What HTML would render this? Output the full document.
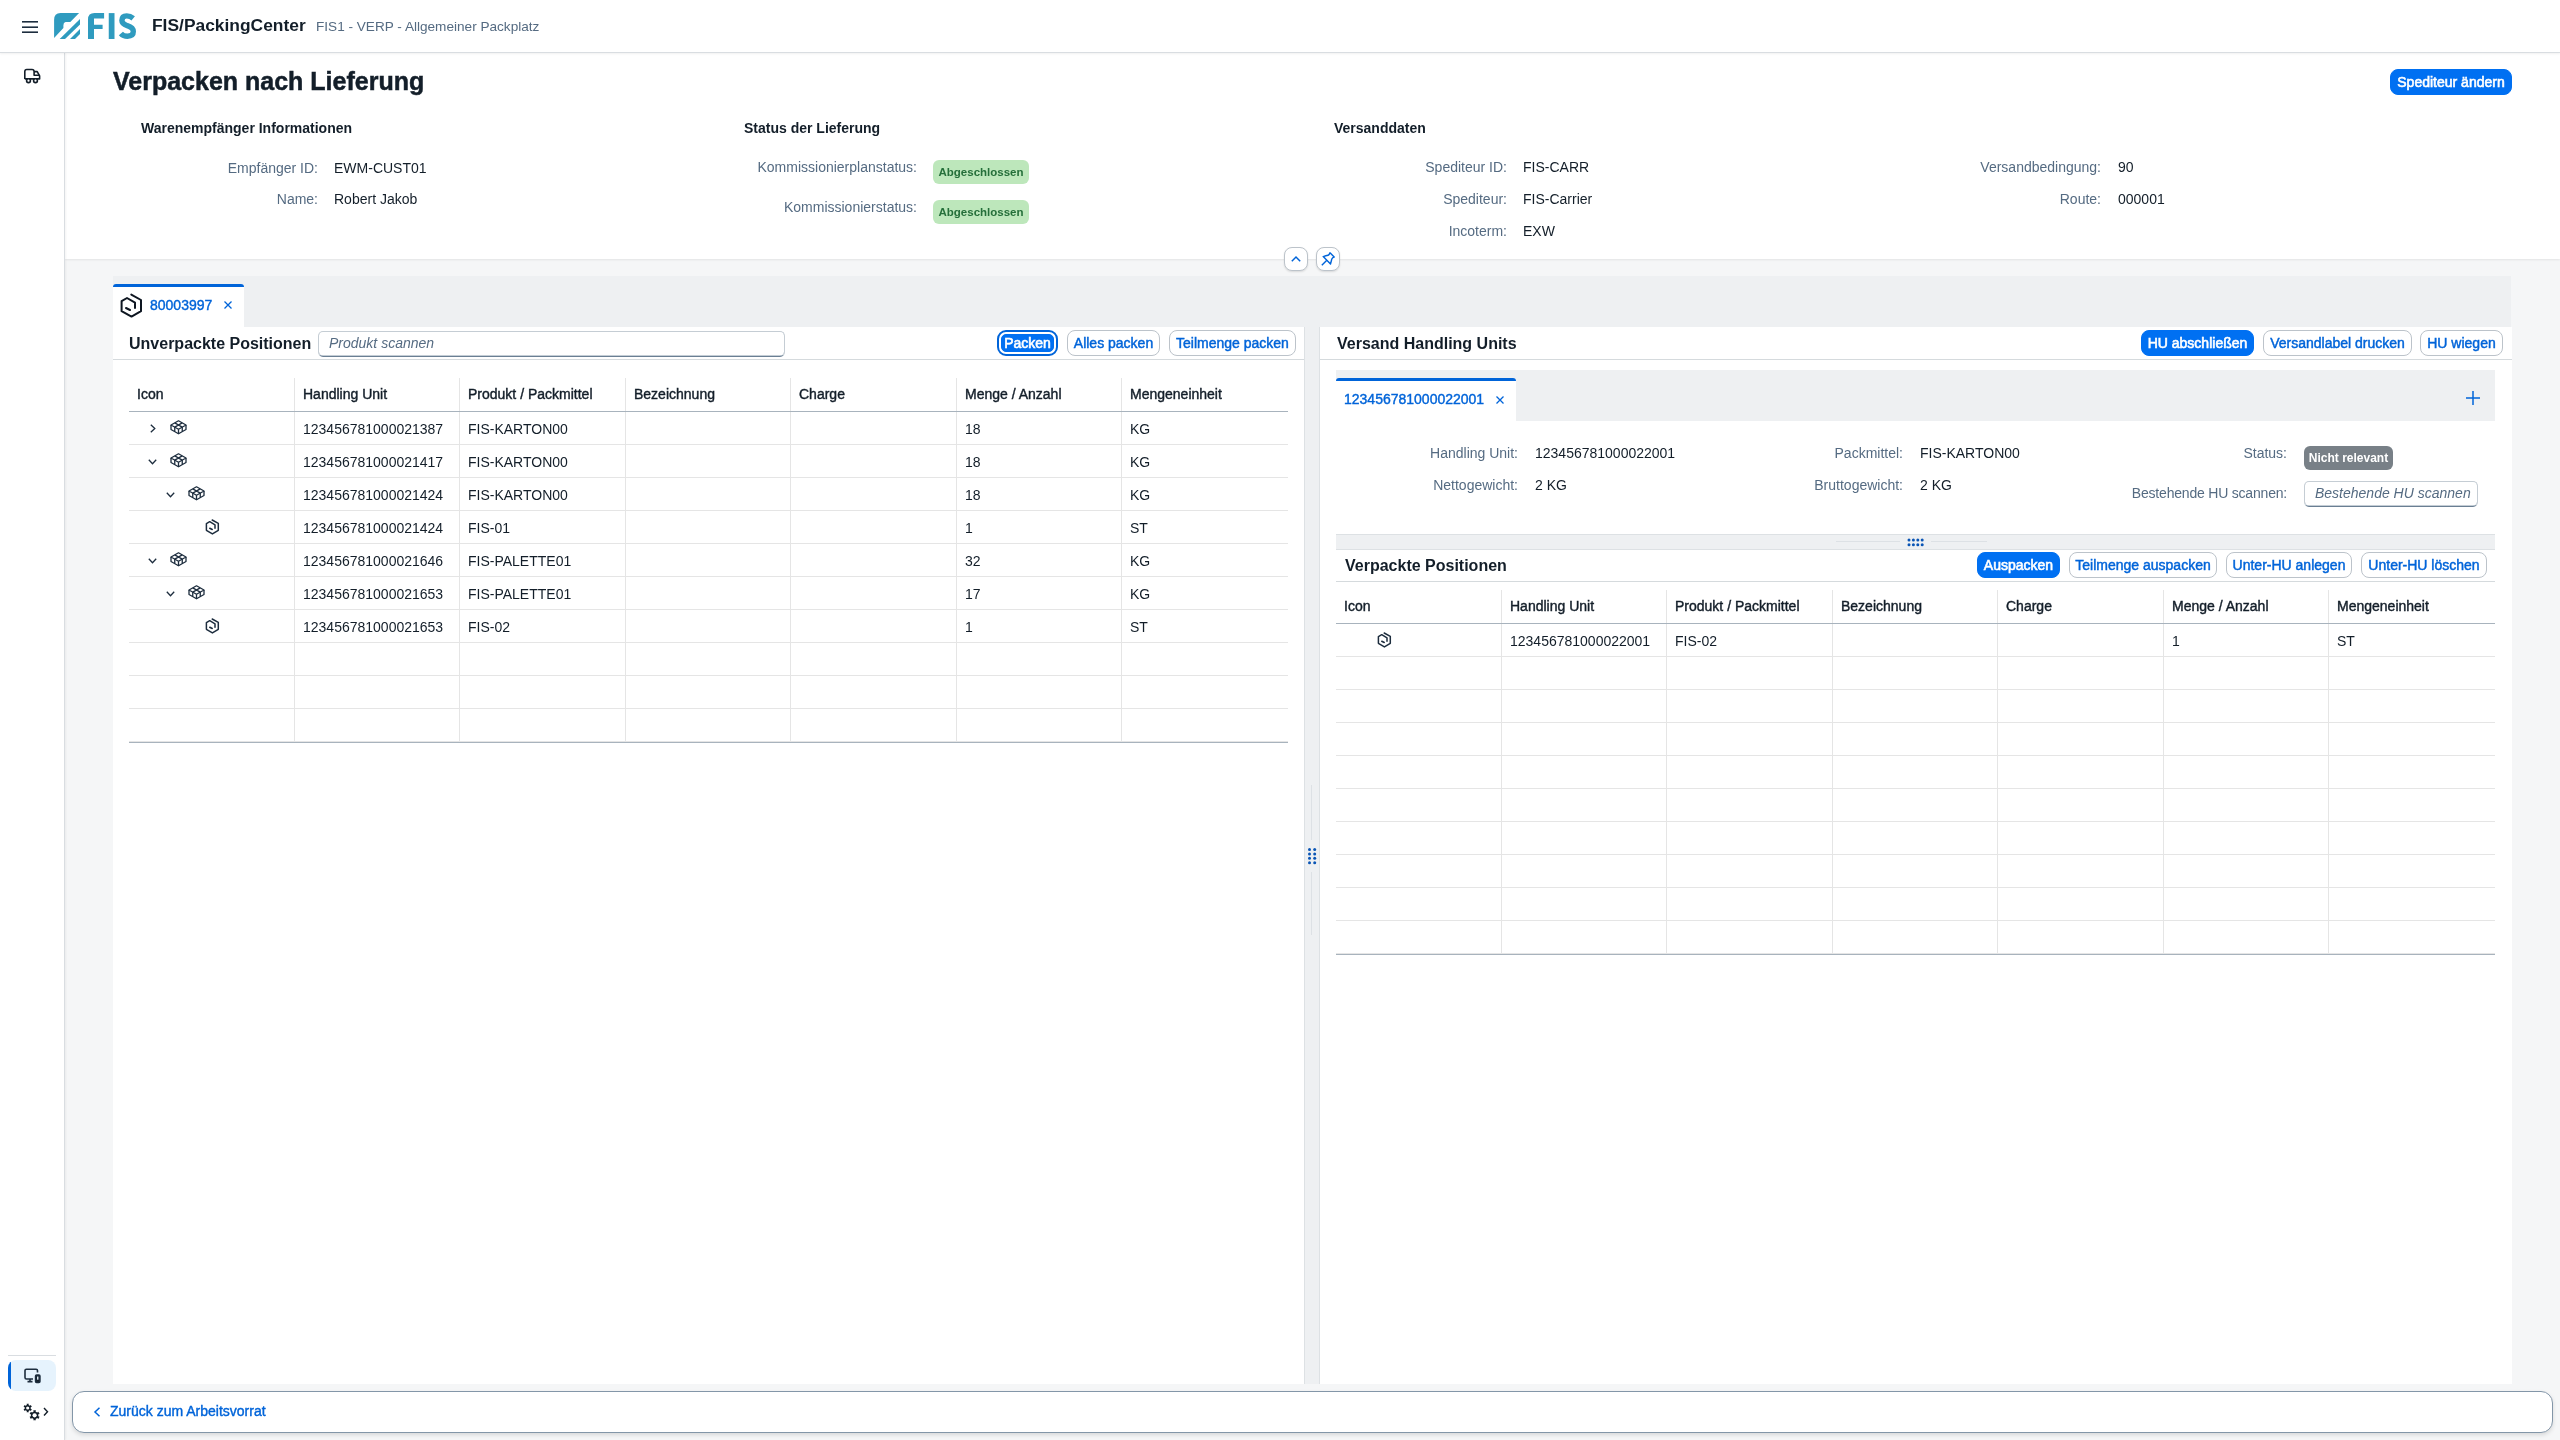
<!DOCTYPE html>
<html><head><meta charset="utf-8">
<style>
*{box-sizing:border-box;margin:0;padding:0}
html,body{width:2560px;height:1440px;overflow:hidden}
body{position:relative;background:#f5f6f7;font-family:"Liberation Sans",sans-serif;color:#131e29;font-size:14px;line-height:16px}
.a{position:absolute;white-space:nowrap}
.lbl{color:#556b82}
.r{text-align:right}
.sb{-webkit-text-stroke:0.4px currentColor}
svg{position:absolute;overflow:visible}
/* shell */
#shell{position:absolute;left:0;top:0;width:2560px;height:53px;background:#fff;border-bottom:1px solid #d9dde1;box-shadow:0 1px 2px rgba(0,0,0,.06);z-index:3}
#nav{position:absolute;left:0;top:53px;width:65px;height:1387px;background:#fff;border-right:1px solid #d9dde1;box-shadow:1px 0 2px rgba(0,0,0,.05);z-index:2}
#hdr{position:absolute;left:65px;top:53px;width:2495px;height:206px;background:#fff;box-shadow:0 1px 2px rgba(0,0,0,.08)}
.btn{position:absolute;height:26px;border:1px solid #bcc3ca;border-radius:8px;background:#fff;color:#0064d9;font-size:14px;line-height:24px;text-align:center;white-space:nowrap;-webkit-text-stroke:0.45px currentColor}
.btn.e{background:#0070f2;border-color:#0070f2;color:#fff;-webkit-text-stroke:0.6px #fff}
.badge{position:absolute;height:24px;border-radius:6px;font-size:12px;line-height:24px;font-weight:bold;text-align:center;white-space:nowrap}
.inp{position:absolute;height:26px;background:#fff;border:1px solid #c5cdd4;border-bottom:1px solid #6a7f93;border-radius:5px;box-shadow:inset 0 -0.5px 0 #8a9bab;color:#556b82;font-style:italic;font-size:14px;line-height:22px;padding-left:10px;white-space:nowrap}
.panel{position:absolute;background:#fff}
.tb{position:absolute;height:33px;border-bottom:1px solid #d5dadd}
.tbl{position:absolute}
.hl{position:absolute;height:1px;background:#e5e5e5}
.vl{position:absolute;width:1px;background:#e5e5e5}
</style></head>
<body>
<div id="root" style="position:absolute;left:0;top:0;width:2560px;height:1440px;overflow:hidden;will-change:transform">

<!-- SHELL -->
<div id="shell">
  <svg style="left:22px;top:20px" width="16" height="14" viewBox="0 0 16 14">
    <rect x="0" y="1" width="16" height="1.6" fill="#1d2d3e"/>
    <rect x="0" y="6.4" width="16" height="1.6" fill="#1d2d3e"/>
    <rect x="0" y="11.4" width="16" height="1.6" fill="#1d2d3e"/>
  </svg>
  <!-- FIS logo -->
  <svg style="left:53px;top:12px" width="84" height="28" viewBox="0 0 84 28">
    <path d="M1.1 26 V8 Q1.1 1.1 7.5 1.1 H26.1 L17.3 10 H12.6 Q10.4 10.6 10.4 13.2 V16.1 Z" fill="#2f9bbf"/>
    <path d="M6.7 27.1 L27 7.1 V12.4 L12 27.1 Z" fill="#2f9bbf"/>
    <path d="M17 27.1 L27 17.1 V22.1 L22 27.1 Z" fill="#2f9bbf"/>
    <path d="M35 27 V7.5 Q35 1.1 41.5 1.1 H51.1 V6.4 H41 V12.7 H49.6 V17 H41 V27 Z" fill="#2f9bbf"/>
    <rect x="55.75" y="1.1" width="5.75" height="25.9" fill="#2f9bbf"/>
    <path d="M80.2 6.3 Q77.3 3.9 73.7 3.9 Q68.9 3.9 68.9 8.6 Q68.9 11.9 74.2 13.7 Q80.3 15.6 80.3 19.6 Q80.3 24.2 74.5 24.2 Q70.3 24.2 67.9 21.4" fill="none" stroke="#2f9bbf" stroke-width="5.4"/>
  </svg>
  <div class="a" style="left:152px;top:15px;font:bold 17.4px/20px 'Liberation Sans';color:#131e29">FIS/PackingCenter</div>
  <div class="a lbl" style="left:316px;top:19px;font-size:13.6px">FIS1 - VERP - Allgemeiner Packplatz</div>
</div>

<!-- LEFT NAV -->
<div id="nav">
  <svg style="left:24px;top:16px" width="17" height="15" viewBox="0 0 17 15" fill="none" stroke="#131e29" stroke-width="1.6" stroke-linejoin="round">
    <path d="M0.8 9.9 V2.6 Q0.8 0.5 2.8 0.5 H8 Q10.1 0.5 10.1 2.6 V6.3 H15.2"/>
    <path d="M10.1 2.6 H13.2 L15.6 6.8 V9.9 H0.8"/>
    <circle cx="4.5" cy="11.7" r="1.9" fill="#fff"/>
    <circle cx="11.5" cy="11.7" r="1.9" fill="#fff"/>
  </svg>
  <div class="a" style="left:8px;top:1302px;width:48px;height:1px;background:#d9dde1"></div>
  <div class="a" style="left:8px;top:1307px;width:48px;height:31px;background:#e6f3fd;border-radius:8px;overflow:hidden">
    <div style="position:absolute;left:0;top:0;width:3px;height:31px;background:#0064d9"></div>
  </div>
  <svg style="left:24px;top:1315px" width="17" height="15" viewBox="0 0 17 15" fill="none" stroke="#1d2d3e" stroke-width="1.6">
    <path d="M13.5 4.5 V2.6 Q13.5 1.2 12.1 1.2 H2.4 Q1 1.2 1 2.6 V9.6 Q1 11 2.4 11 H9"/>
    <path d="M6 11 V13.3 M3.5 13.6 H8.5"/>
    <rect x="11.6" y="7" width="4.3" height="7.4" rx="1" fill="#131e29"/>
    <rect x="13.05" y="8.5" width="1.4" height="3.2" fill="#e6f3fd" stroke="none"/>
  </svg>
  <svg style="left:23px;top:1350px" width="27" height="20" viewBox="0 0 27 20"><path d="M3.64 0.83 L5.76 0.83 L5.54 2.02 L6.87 2.78 L7.78 2.00 L8.84 3.84 L7.70 4.23 L7.70 5.77 L8.84 6.16 L7.78 8.00 L6.87 7.22 L5.54 7.98 L5.76 9.17 L3.64 9.17 L3.86 7.98 L2.53 7.22 L1.62 8.00 L0.56 6.16 L1.70 5.77 L1.70 4.23 L0.56 3.84 L1.62 2.00 L2.53 2.78 L3.86 2.02Z" fill="#131e29"/><circle cx="4.7" cy="5.0" r="1.6" fill="#fff"/><path d="M10.31 7.26 L12.89 7.26 L12.63 8.64 L14.26 9.58 L15.32 8.67 L16.61 10.89 L15.28 11.36 L15.28 13.24 L16.61 13.71 L15.32 15.93 L14.26 15.02 L12.63 15.96 L12.89 17.34 L10.31 17.34 L10.57 15.96 L8.94 15.02 L7.88 15.93 L6.59 13.71 L7.92 13.24 L7.92 11.36 L6.59 10.89 L7.88 8.67 L8.94 9.58 L10.57 8.64Z" fill="#131e29"/><circle cx="11.6" cy="12.3" r="2.1" fill="#fff"/><path d="M21 5 L24.5 8.7 L21 12.4" fill="none" stroke="#131e29" stroke-width="1.4"/></svg>
</div>

<!-- PAGE HEADER -->
<div id="hdr"></div>
<div class="a" style="left:113px;top:66px;font:bold 25px/30px 'Liberation Sans';color:#131e29;-webkit-text-stroke:0.5px #131e29">Verpacken nach Lieferung</div>
<div class="btn e" style="left:2390px;top:69px;width:122px">Spediteur ändern</div>

<div class="a" style="left:141px;top:120px;font-weight:bold">Warenempfänger Informationen</div>
<div class="a lbl r" style="left:118px;top:160px;width:200px">Empfänger ID:</div>
<div class="a" style="left:334px;top:160px">EWM-CUST01</div>
<div class="a lbl r" style="left:118px;top:191px;width:200px">Name:</div>
<div class="a" style="left:334px;top:191px">Robert Jakob</div>

<div class="a" style="left:744px;top:120px;font-weight:bold">Status der Lieferung</div>
<div class="a lbl r" style="left:617px;top:159px;width:300px">Kommissionierplanstatus:</div>
<div class="badge" style="left:933px;top:160px;width:96px;background:#bde7bb;color:#256f3a;font-size:11.5px">Abgeschlossen</div>
<div class="a lbl r" style="left:617px;top:199px;width:300px">Kommissionierstatus:</div>
<div class="badge" style="left:933px;top:200px;width:96px;background:#bde7bb;color:#256f3a;font-size:11.5px">Abgeschlossen</div>

<div class="a" style="left:1334px;top:120px;font-weight:bold">Versanddaten</div>
<div class="a lbl r" style="left:1307px;top:159px;width:200px">Spediteur ID:</div>
<div class="a" style="left:1523px;top:159px">FIS-CARR</div>
<div class="a lbl r" style="left:1307px;top:191px;width:200px">Spediteur:</div>
<div class="a" style="left:1523px;top:191px">FIS-Carrier</div>
<div class="a lbl r" style="left:1307px;top:223px;width:200px">Incoterm:</div>
<div class="a" style="left:1523px;top:223px">EXW</div>

<div class="a lbl r" style="left:1901px;top:159px;width:200px">Versandbedingung:</div>
<div class="a" style="left:2118px;top:159px">90</div>
<div class="a lbl r" style="left:1901px;top:191px;width:200px">Route:</div>
<div class="a" style="left:2118px;top:191px">000001</div>

<!-- collapse / pin -->
<div class="a" style="left:1284px;top:247px;width:24px;height:24px;background:#fff;border:1px solid #bcc3ca;border-radius:8px;box-shadow:0 1px 2px rgba(0,0,0,.12)"></div>
<svg style="left:1291px;top:256px" width="10" height="6" viewBox="0 0 10 6"><path d="M0.8 5.2 L5 1 L9.2 5.2" fill="none" stroke="#0064d9" stroke-width="1.5"/></svg>
<div class="a" style="left:1316px;top:247px;width:24px;height:24px;background:#fff;border:1px solid #bcc3ca;border-radius:8px;box-shadow:0 1px 2px rgba(0,0,0,.12)"></div>
<svg style="left:1321px;top:252px" width="14" height="14" viewBox="0 0 14 14" fill="none" stroke="#0064d9" stroke-width="1.4" stroke-linejoin="round">
  <path d="M9 0.8 L13.2 5 Q11.5 5.5 10.8 7 Q10.3 9 9.5 12 L2.2 4.6 Q5 3.8 7 3.3 Q8.5 2.6 9 0.8 Z"/>
  <path d="M5.8 8.2 L0.8 13.2"/>
</svg>

<!-- TAB STRIP -->
<div class="a" style="left:113px;top:276px;width:2398px;height:51px;background:#eef0f2"></div>
<div class="a" style="left:113px;top:284px;width:131px;height:43px;background:#fff;border-radius:4px 4px 0 0"></div>
<div class="a" style="left:113px;top:284px;width:131px;height:3px;background:#0064d9;border-radius:3px 3px 0 0"></div>
<svg style="left:115px;top:288px" width="35" height="36" viewBox="0 0 35 36" fill="none" stroke="#0e1621" stroke-width="2" stroke-linecap="round" stroke-linejoin="round">
  <path d="M16.3 6.6 L26 12 V23.2 L16.5 28.6 L6.6 23.2 V13.2 L12 10 L20 14.7 V20"/>
  <path d="M11 20 L15 22"/>
</svg>
<div class="a sb" style="left:150px;top:297px;color:#0064d9">80003997</div>
<svg style="left:224px;top:301px" width="8" height="8" viewBox="0 0 8 8"><path d="M0.5 0.5 L7.5 7.5 M7.5 0.5 L0.5 7.5" stroke="#0064d9" stroke-width="1.3"/></svg>

<!-- LEFT PANEL -->
<div class="panel" style="left:113px;top:327px;width:1191px;height:1057px"></div>
<!-- splitter -->
<div class="a" style="left:1304px;top:327px;width:16px;height:1057px;background:#eef0f2;border-left:1px solid #dde1e4;border-right:1px solid #dde1e4"></div>
<!-- RIGHT PANEL -->
<div class="panel" style="left:1320px;top:327px;width:1192px;height:1057px"></div>

<!-- FOOTER -->
<div class="a" style="left:72px;top:1391px;width:2481px;height:42px;background:#fff;border:1px solid #8396a8;border-radius:12px;box-shadow:0 2px 4px rgba(0,0,0,.12)"></div>
<svg style="left:93px;top:1407px" width="8" height="10" viewBox="0 0 8 10"><path d="M6.5 0.8 L2 5 L6.5 9.2" fill="none" stroke="#0064d9" stroke-width="1.5"/></svg>
<div class="a sb" style="left:110px;top:1403px;color:#0064d9">Zurück zum Arbeitsvorrat</div>

<!--CONTENT-->
<div class="tb" style="left:113px;top:327px;width:1191px"></div>
<div class="a" style="left:129px;top:335px;font:bold 16px/18px 'Liberation Sans'">Unverpackte Positionen</div>
<div class="inp" style="left:318px;top:331px;width:467px">Produkt scannen</div>
<div class="a" style="left:997px;top:330px;width:61px;height:26px;border:2px solid #0064d9;border-radius:9px;background:#fff"></div>
<div class="btn e" style="left:1001px;top:334px;width:53px;height:18px;line-height:16px;border-radius:5px">Packen</div>
<div class="btn" style="left:1067px;top:330px;width:93px">Alles packen</div>
<div class="btn" style="left:1169px;top:330px;width:127px">Teilmenge packen</div>
<div class="vl" style="left:294px;top:378px;height:363px"></div>
<div class="vl" style="left:459px;top:378px;height:363px"></div>
<div class="vl" style="left:625px;top:378px;height:363px"></div>
<div class="vl" style="left:790px;top:378px;height:363px"></div>
<div class="vl" style="left:956px;top:378px;height:363px"></div>
<div class="vl" style="left:1121px;top:378px;height:363px"></div>
<div class="a sb" style="left:137px;top:386px">Icon</div>
<div class="a sb" style="left:303px;top:386px">Handling Unit</div>
<div class="a sb" style="left:468px;top:386px">Produkt / Packmittel</div>
<div class="a sb" style="left:634px;top:386px">Bezeichnung</div>
<div class="a sb" style="left:799px;top:386px">Charge</div>
<div class="a sb" style="left:965px;top:386px">Menge / Anzahl</div>
<div class="a sb" style="left:1130px;top:386px">Mengeneinheit</div>
<div class="hl" style="left:129px;top:411px;width:1159px;background:#a8b3bd"></div>
<svg style="left:150px;top:424px" width="6" height="9" viewBox="0 0 6 9"><path d="M0.8 0.8 L4.8 4.5 L0.8 8.2" fill="none" stroke="#1d2d3e" stroke-width="1.3"/></svg>
<svg style="left:170px;top:420px" width="17" height="15" viewBox="0 0 17 15" fill="none" stroke="#1d2d3e" stroke-width="1.3" stroke-linejoin="round"><path d="M8.5 0.8 L16 5 L8.5 9.2 L1 5 Z"/><path d="M1 5 V9.5 L8.5 13.8 L16 9.5 V5"/><path d="M8.5 9.2 V13.8"/><path d="M4.75 2.9 L12.25 7.1 M12.25 2.9 L4.75 7.1"/><path d="M4.75 7.1 V11.6 M12.25 7.1 V11.6"/></svg>
<div class="a" style="left:303px;top:421px">123456781000021387</div>
<div class="a" style="left:468px;top:421px">FIS-KARTON00</div>
<div class="a" style="left:965px;top:421px">18</div>
<div class="a" style="left:1130px;top:421px">KG</div>
<div class="hl" style="left:129px;top:444px;width:1159px"></div>
<svg style="left:148px;top:459px" width="9" height="6" viewBox="0 0 9 6"><path d="M0.8 0.8 L4.5 4.8 L8.2 0.8" fill="none" stroke="#1d2d3e" stroke-width="1.3"/></svg>
<svg style="left:170px;top:453px" width="17" height="15" viewBox="0 0 17 15" fill="none" stroke="#1d2d3e" stroke-width="1.3" stroke-linejoin="round"><path d="M8.5 0.8 L16 5 L8.5 9.2 L1 5 Z"/><path d="M1 5 V9.5 L8.5 13.8 L16 9.5 V5"/><path d="M8.5 9.2 V13.8"/><path d="M4.75 2.9 L12.25 7.1 M12.25 2.9 L4.75 7.1"/><path d="M4.75 7.1 V11.6 M12.25 7.1 V11.6"/></svg>
<div class="a" style="left:303px;top:454px">123456781000021417</div>
<div class="a" style="left:468px;top:454px">FIS-KARTON00</div>
<div class="a" style="left:965px;top:454px">18</div>
<div class="a" style="left:1130px;top:454px">KG</div>
<div class="hl" style="left:129px;top:477px;width:1159px"></div>
<svg style="left:166px;top:492px" width="9" height="6" viewBox="0 0 9 6"><path d="M0.8 0.8 L4.5 4.8 L8.2 0.8" fill="none" stroke="#1d2d3e" stroke-width="1.3"/></svg>
<svg style="left:188px;top:486px" width="17" height="15" viewBox="0 0 17 15" fill="none" stroke="#1d2d3e" stroke-width="1.3" stroke-linejoin="round"><path d="M8.5 0.8 L16 5 L8.5 9.2 L1 5 Z"/><path d="M1 5 V9.5 L8.5 13.8 L16 9.5 V5"/><path d="M8.5 9.2 V13.8"/><path d="M4.75 2.9 L12.25 7.1 M12.25 2.9 L4.75 7.1"/><path d="M4.75 7.1 V11.6 M12.25 7.1 V11.6"/></svg>
<div class="a" style="left:303px;top:487px">123456781000021424</div>
<div class="a" style="left:468px;top:487px">FIS-KARTON00</div>
<div class="a" style="left:965px;top:487px">18</div>
<div class="a" style="left:1130px;top:487px">KG</div>
<div class="hl" style="left:129px;top:510px;width:1159px"></div>
<svg style="left:205px;top:519px" width="15" height="17" viewBox="0 0 15 17" fill="none" stroke="#1d2d3e" stroke-width="1.5" stroke-linecap="round" stroke-linejoin="round"><path d="M7.2 1 L13.3 4.3 V11.3 L7.4 14.9 L1.4 11.3 V4.7 L4.75 2.7 L10 5.8 V9.25"/><path d="M4.75 9.25 L7.25 10.5"/></svg>
<div class="a" style="left:303px;top:520px">123456781000021424</div>
<div class="a" style="left:468px;top:520px">FIS-01</div>
<div class="a" style="left:965px;top:520px">1</div>
<div class="a" style="left:1130px;top:520px">ST</div>
<div class="hl" style="left:129px;top:543px;width:1159px"></div>
<svg style="left:148px;top:558px" width="9" height="6" viewBox="0 0 9 6"><path d="M0.8 0.8 L4.5 4.8 L8.2 0.8" fill="none" stroke="#1d2d3e" stroke-width="1.3"/></svg>
<svg style="left:170px;top:552px" width="17" height="15" viewBox="0 0 17 15" fill="none" stroke="#1d2d3e" stroke-width="1.3" stroke-linejoin="round"><path d="M8.5 0.8 L16 5 L8.5 9.2 L1 5 Z"/><path d="M1 5 V9.5 L8.5 13.8 L16 9.5 V5"/><path d="M8.5 9.2 V13.8"/><path d="M4.75 2.9 L12.25 7.1 M12.25 2.9 L4.75 7.1"/><path d="M4.75 7.1 V11.6 M12.25 7.1 V11.6"/></svg>
<div class="a" style="left:303px;top:553px">123456781000021646</div>
<div class="a" style="left:468px;top:553px">FIS-PALETTE01</div>
<div class="a" style="left:965px;top:553px">32</div>
<div class="a" style="left:1130px;top:553px">KG</div>
<div class="hl" style="left:129px;top:576px;width:1159px"></div>
<svg style="left:166px;top:591px" width="9" height="6" viewBox="0 0 9 6"><path d="M0.8 0.8 L4.5 4.8 L8.2 0.8" fill="none" stroke="#1d2d3e" stroke-width="1.3"/></svg>
<svg style="left:188px;top:585px" width="17" height="15" viewBox="0 0 17 15" fill="none" stroke="#1d2d3e" stroke-width="1.3" stroke-linejoin="round"><path d="M8.5 0.8 L16 5 L8.5 9.2 L1 5 Z"/><path d="M1 5 V9.5 L8.5 13.8 L16 9.5 V5"/><path d="M8.5 9.2 V13.8"/><path d="M4.75 2.9 L12.25 7.1 M12.25 2.9 L4.75 7.1"/><path d="M4.75 7.1 V11.6 M12.25 7.1 V11.6"/></svg>
<div class="a" style="left:303px;top:586px">123456781000021653</div>
<div class="a" style="left:468px;top:586px">FIS-PALETTE01</div>
<div class="a" style="left:965px;top:586px">17</div>
<div class="a" style="left:1130px;top:586px">KG</div>
<div class="hl" style="left:129px;top:609px;width:1159px"></div>
<svg style="left:205px;top:618px" width="15" height="17" viewBox="0 0 15 17" fill="none" stroke="#1d2d3e" stroke-width="1.5" stroke-linecap="round" stroke-linejoin="round"><path d="M7.2 1 L13.3 4.3 V11.3 L7.4 14.9 L1.4 11.3 V4.7 L4.75 2.7 L10 5.8 V9.25"/><path d="M4.75 9.25 L7.25 10.5"/></svg>
<div class="a" style="left:303px;top:619px">123456781000021653</div>
<div class="a" style="left:468px;top:619px">FIS-02</div>
<div class="a" style="left:965px;top:619px">1</div>
<div class="a" style="left:1130px;top:619px">ST</div>
<div class="hl" style="left:129px;top:642px;width:1159px"></div>
<div class="hl" style="left:129px;top:675px;width:1159px"></div>
<div class="hl" style="left:129px;top:708px;width:1159px"></div>
<div class="hl" style="left:129px;top:741px;width:1159px"></div>
<div class="hl" style="left:129px;top:742px;width:1159px;background:#a8b3bd"></div>
<div class="tb" style="left:1320px;top:327px;width:1192px"></div>
<div class="a" style="left:1337px;top:335px;font:bold 16px/18px 'Liberation Sans'">Versand Handling Units</div>
<div class="btn e" style="left:2141px;top:330px;width:113px">HU abschließen</div>
<div class="btn" style="left:2263px;top:330px;width:149px">Versandlabel drucken</div>
<div class="btn" style="left:2420px;top:330px;width:83px">HU wiegen</div>
<div class="a" style="left:1336px;top:370px;width:1159px;height:51px;background:#eef0f2"></div>
<div class="a" style="left:1336px;top:378px;width:180px;height:43px;background:#fff;border-radius:4px 4px 0 0"></div>
<div class="a" style="left:1336px;top:378px;width:180px;height:3px;background:#0064d9;border-radius:3px 3px 0 0"></div>
<div class="a sb" style="left:1344px;top:391px;color:#0064d9">123456781000022001</div>
<svg style="left:1496px;top:396px" width="8" height="8" viewBox="0 0 8 8"><path d="M0.5 0.5 L7.5 7.5 M7.5 0.5 L0.5 7.5" stroke="#0064d9" stroke-width="1.3"/></svg>
<svg style="left:2466px;top:391px" width="14" height="14" viewBox="0 0 14 14"><path d="M7 0 V14 M0 7 H14" stroke="#0064d9" stroke-width="1.5"/></svg>
<div class="a lbl r" style="left:1318px;top:445px;width:200px">Handling Unit:</div>
<div class="a" style="left:1535px;top:445px">123456781000022001</div>
<div class="a lbl r" style="left:1318px;top:477px;width:200px">Nettogewicht:</div>
<div class="a" style="left:1535px;top:477px">2 KG</div>
<div class="a lbl r" style="left:1703px;top:445px;width:200px">Packmittel:</div>
<div class="a" style="left:1920px;top:445px">FIS-KARTON00</div>
<div class="a lbl r" style="left:1703px;top:477px;width:200px">Bruttogewicht:</div>
<div class="a" style="left:1920px;top:477px">2 KG</div>
<div class="a lbl r" style="left:2087px;top:445px;width:200px">Status:</div>
<div class="badge" style="left:2304px;top:446px;width:89px;background:#788087;color:#fff">Nicht relevant</div>
<div class="a lbl r" style="left:2037px;top:485px;width:250px;letter-spacing:-0.2px">Bestehende HU scannen:</div>
<div class="inp" style="left:2304px;top:481px;width:174px">Bestehende HU scannen</div>
<div class="a" style="left:1336px;top:534px;width:1159px;height:16px;background:#eef0f2;border-top:1px solid #dde1e4;border-bottom:1px solid #dde1e4"></div>
<svg style="left:1907px;top:538px" width="18" height="9" viewBox="0 0 18 9" fill="#0a55b5"><circle cx="2.0" cy="2.0" r="1.5"/><circle cx="2.0" cy="6.7" r="1.5"/><circle cx="6.4" cy="2.0" r="1.5"/><circle cx="6.4" cy="6.7" r="1.5"/><circle cx="10.8" cy="2.0" r="1.5"/><circle cx="10.8" cy="6.7" r="1.5"/><circle cx="15.200000000000001" cy="2.0" r="1.5"/><circle cx="15.200000000000001" cy="6.7" r="1.5"/></svg>
<div class="a" style="left:1836px;top:541px;width:64px;height:1px;background:#dde1e5"></div>
<div class="a" style="left:1931px;top:541px;width:56px;height:1px;background:#dde1e5"></div>
<div class="tb" style="left:1336px;top:549px;width:1159px"></div>
<div class="a" style="left:1345px;top:557px;font:bold 16px/18px 'Liberation Sans'">Verpackte Positionen</div>
<div class="btn e" style="left:1977px;top:552px;width:83px">Auspacken</div>
<div class="btn" style="left:2069px;top:552px;width:148px">Teilmenge auspacken</div>
<div class="btn" style="left:2226px;top:552px;width:126px">Unter-HU anlegen</div>
<div class="btn" style="left:2361px;top:552px;width:126px">Unter-HU löschen</div>
<div class="vl" style="left:1501px;top:590px;height:363px"></div>
<div class="vl" style="left:1666px;top:590px;height:363px"></div>
<div class="vl" style="left:1832px;top:590px;height:363px"></div>
<div class="vl" style="left:1997px;top:590px;height:363px"></div>
<div class="vl" style="left:2163px;top:590px;height:363px"></div>
<div class="vl" style="left:2328px;top:590px;height:363px"></div>
<div class="a sb" style="left:1344px;top:598px">Icon</div>
<div class="a sb" style="left:1510px;top:598px">Handling Unit</div>
<div class="a sb" style="left:1675px;top:598px">Produkt / Packmittel</div>
<div class="a sb" style="left:1841px;top:598px">Bezeichnung</div>
<div class="a sb" style="left:2006px;top:598px">Charge</div>
<div class="a sb" style="left:2172px;top:598px">Menge / Anzahl</div>
<div class="a sb" style="left:2337px;top:598px">Mengeneinheit</div>
<div class="hl" style="left:1336px;top:623px;width:1159px;background:#a8b3bd"></div>
<svg style="left:1377px;top:632px" width="15" height="17" viewBox="0 0 15 17" fill="none" stroke="#1d2d3e" stroke-width="1.5" stroke-linecap="round" stroke-linejoin="round"><path d="M7.2 1 L13.3 4.3 V11.3 L7.4 14.9 L1.4 11.3 V4.7 L4.75 2.7 L10 5.8 V9.25"/><path d="M4.75 9.25 L7.25 10.5"/></svg>
<div class="a" style="left:1510px;top:633px">123456781000022001</div>
<div class="a" style="left:1675px;top:633px">FIS-02</div>
<div class="a" style="left:2172px;top:633px">1</div>
<div class="a" style="left:2337px;top:633px">ST</div>
<div class="hl" style="left:1336px;top:656px;width:1159px"></div>
<div class="hl" style="left:1336px;top:689px;width:1159px"></div>
<div class="hl" style="left:1336px;top:722px;width:1159px"></div>
<div class="hl" style="left:1336px;top:755px;width:1159px"></div>
<div class="hl" style="left:1336px;top:788px;width:1159px"></div>
<div class="hl" style="left:1336px;top:821px;width:1159px"></div>
<div class="hl" style="left:1336px;top:854px;width:1159px"></div>
<div class="hl" style="left:1336px;top:887px;width:1159px"></div>
<div class="hl" style="left:1336px;top:920px;width:1159px"></div>
<div class="hl" style="left:1336px;top:953px;width:1159px"></div>
<div class="hl" style="left:1336px;top:954px;width:1159px;background:#a8b3bd"></div>
<svg style="left:1308px;top:848px" width="9" height="17" viewBox="0 0 9 17" fill="#0a55b5"><circle cx="1.5" cy="1.5" r="1.5"/><circle cx="1.5" cy="5.9" r="1.5"/><circle cx="1.5" cy="10.3" r="1.5"/><circle cx="1.5" cy="14.700000000000001" r="1.5"/><circle cx="6.7" cy="1.5" r="1.5"/><circle cx="6.7" cy="5.9" r="1.5"/><circle cx="6.7" cy="10.3" r="1.5"/><circle cx="6.7" cy="14.700000000000001" r="1.5"/></svg>
<div class="a" style="left:1311px;top:785px;width:1px;height:55px;background:#dde1e5"></div>
<div class="a" style="left:1311px;top:872px;width:1px;height:63px;background:#dde1e5"></div>
<!--/CONTENT-->
</div>
</body></html>
